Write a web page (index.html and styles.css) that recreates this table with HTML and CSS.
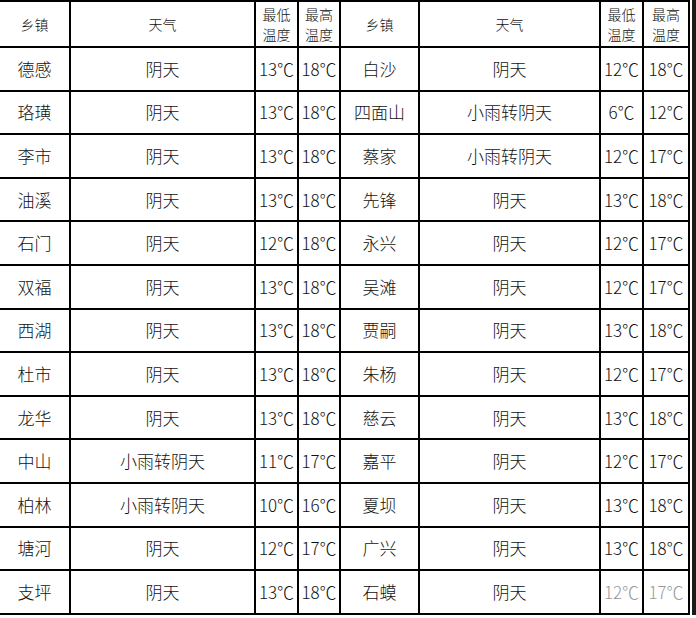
FILE: index.html
```html
<!DOCTYPE html>
<html lang="zh">
<head>
<meta charset="utf-8">
<title>乡镇天气</title>
<link rel="stylesheet" href="styles.css">
</head>
<body>
<div class="frame">
<table class="weather">
<colgroup>
<col class="c-town"><col class="c-wx"><col class="c-t"><col class="c-t2">
<col class="c-town2"><col class="c-wx2"><col class="c-t"><col class="c-t3">
</colgroup>
<thead>
<tr>
<th>乡镇</th><th>天气</th><th>最低<br>温度</th><th>最高<br>温度</th>
<th>乡镇</th><th>天气</th><th>最低<br>温度</th><th>最高<br>温度</th>
</tr>
</thead>
<tbody>
<tr><td>德感</td><td>阴天</td><td>13℃</td><td>18℃</td><td>白沙</td><td>阴天</td><td>12℃</td><td>18℃</td></tr>
<tr><td>珞璜</td><td>阴天</td><td>13℃</td><td>18℃</td><td>四面山</td><td>小雨转阴天</td><td>6℃</td><td>12℃</td></tr>
<tr><td>李市</td><td>阴天</td><td>13℃</td><td>18℃</td><td>蔡家</td><td>小雨转阴天</td><td>12℃</td><td>17℃</td></tr>
<tr><td>油溪</td><td>阴天</td><td>13℃</td><td>18℃</td><td>先锋</td><td>阴天</td><td>13℃</td><td>18℃</td></tr>
<tr><td>石门</td><td>阴天</td><td>12℃</td><td>18℃</td><td>永兴</td><td>阴天</td><td>12℃</td><td>17℃</td></tr>
<tr><td>双福</td><td>阴天</td><td>13℃</td><td>18℃</td><td>吴滩</td><td>阴天</td><td>12℃</td><td>17℃</td></tr>
<tr><td>西湖</td><td>阴天</td><td>13℃</td><td>18℃</td><td>贾嗣</td><td>阴天</td><td>13℃</td><td>18℃</td></tr>
<tr><td>杜市</td><td>阴天</td><td>13℃</td><td>18℃</td><td>朱杨</td><td>阴天</td><td>12℃</td><td>17℃</td></tr>
<tr><td>龙华</td><td>阴天</td><td>13℃</td><td>18℃</td><td>慈云</td><td>阴天</td><td>13℃</td><td>18℃</td></tr>
<tr><td>中山</td><td>小雨转阴天</td><td>11℃</td><td>17℃</td><td>嘉平</td><td>阴天</td><td>12℃</td><td>17℃</td></tr>
<tr><td>柏林</td><td>小雨转阴天</td><td>10℃</td><td>16℃</td><td>夏坝</td><td>阴天</td><td>13℃</td><td>18℃</td></tr>
<tr><td>塘河</td><td>阴天</td><td>12℃</td><td>17℃</td><td>广兴</td><td>阴天</td><td>13℃</td><td>18℃</td></tr>
<tr><td>支坪</td><td>阴天</td><td>13℃</td><td>18℃</td><td>石蟆</td><td>阴天</td><td class="faded faded-edge">12℃</td><td class="faded">17℃</td></tr>
</tbody>
</table>
</div>
</body>
</html>
```
FILE: styles.css
```css
html, body {
  margin: 0;
  padding: 0;
  background: #fff;
}

.frame {
  display: inline-block;
  padding-right: 2px;
  border-right: 4px solid #1a1a1a;
}

.weather {
  border-collapse: collapse;
  table-layout: fixed;
  width: 689px;
  font-family: "Noto Sans CJK SC", "Noto Sans", sans-serif;
  font-weight: 300;
  color: #111;
}

.c-town { width: 70px; }
.c-wx { width: 185px; }
.c-t { width: 43px; }
.c-t2 { width: 42px; }
.c-town2 { width: 79px; }
.c-wx2 { width: 181px; }
.c-t3 { width: 46px; }

.weather th,
.weather td {
  border: 2px solid #000;
  padding: 0;
  text-align: center;
  vertical-align: middle;
  overflow: hidden;
  white-space: nowrap;
}

.weather th:first-child,
.weather td:first-child {
  border-left: none;
}

.weather th {
  height: 44px;
  font-size: 14px;
  font-weight: 300;
  line-height: 20px;
}

.weather td {
  height: 41.6px;
  font-size: 17px;
  line-height: 20px;
}

.weather td.faded {
  color: #999;
}

.weather td.faded-edge {
  border-left-color: #999;
}
```
